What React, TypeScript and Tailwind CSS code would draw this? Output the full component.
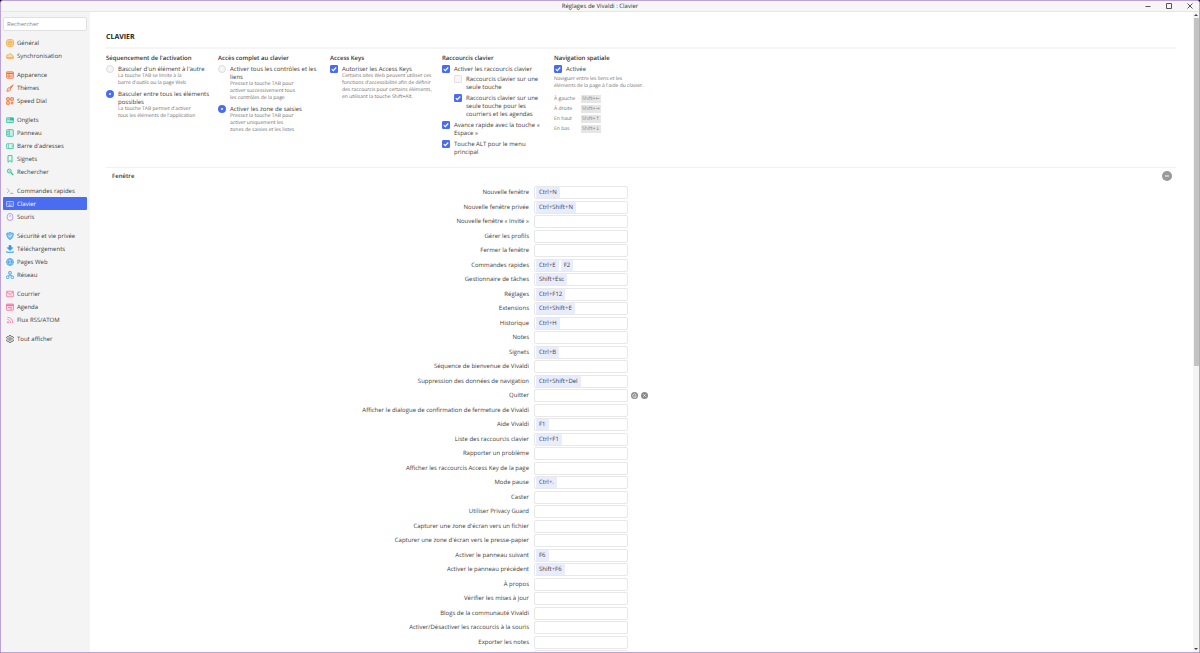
import { useId, type ReactNode } from 'react';

type IconName =
  | 'general' | 'sync' | 'appearance' | 'themes' | 'speeddial' | 'tabs' | 'panel' | 'address'
  | 'bookmark' | 'search' | 'commands' | 'keyboard' | 'mouse' | 'shield' | 'download' | 'globe'
  | 'network' | 'mail' | 'calendar' | 'rss' | 'gear';

const drawings: Record<IconName, ReactNode> = {
  general: (
    <>
      <rect x="1" y="1" width="14" height="14" rx="4.5" fill="currentColor" fillOpacity=".35" />
      <circle cx="8" cy="8" r="4" />
      <path d="M8 8l2-2M8 5.5v2.5H5.5" />
    </>
  ),
  sync: <path d="M4.200 13.500h8a3 3 0 0 0 .5-6A4.200 4.200 0 0 0 5 5.500 4 4 0 0 0 4.200 13.500zM1.500 11h13" fill="currentColor" fillOpacity=".3" />,
  appearance: (
    <>
      <rect x="1.200" y="1.500" width="13.600" height="13" rx="1.500" fill="currentColor" fillOpacity=".2" />
      <path d="M1 4.500h14" strokeWidth="2.500" />
      <path d="M4 8h4v4H4zM10.500 8H13M10.500 11.500H13" />
    </>
  ),
  themes: (
    <>
      <path d="M14.500 1.500L8 6.500l1.800 2L14.500 1.500z" fill="currentColor" />
      <path d="M7 7.500l2 2c1 3-2.500 5.500-7.500 5 1.500-1.500.5-3 1.500-5 .8-1.700 2.500-2.200 4-2z" fill="currentColor" fillOpacity=".25" />
    </>
  ),
  speeddial: <path d="M1.500 1.500h5v5h-5zM9.500 1.500h5v5h-5zM1.500 9.500h5v5h-5zM12 9v6M9 12h6" strokeWidth="2" />,
  tabs: (
    <>
      <rect x="0.800" y="3.500" width="14.400" height="9.500" rx="1" fill="currentColor" fillOpacity=".3" />
      <path d="M8 4.500h6.500V8H8z" fill="currentColor" />
      <path d="M3 7h2.500" />
    </>
  ),
  panel: (
    <>
      <rect x="1.200" y="1.200" width="13.600" height="13.600" rx="2" fill="currentColor" fillOpacity=".2" />
      <path d="M6.500 1.500v13M2.500 5H5M2.500 8H5M2.500 11H5" />
    </>
  ),
  address: (
    <>
      <rect x="0.800" y="3.500" width="14.400" height="9.500" rx="1.500" />
      <path d="M4.500 4v8.500M12.500 5.500v5.500" />
    </>
  ),
  bookmark: <path d="M4 1.200h8v13.300L8 11l-4 3.500z" strokeWidth="1.800" />,
  search: (
    <>
      <circle cx="6.500" cy="6" r="4" fill="currentColor" fillOpacity=".3" />
      <path d="M9.500 9l5 5" strokeWidth="2.300" />
    </>
  ),
  commands: <path d="M2 3l5 4.500L2 12M8 13h7M10 10l1 1" strokeWidth="1.300" />,
  keyboard: (
    <>
      <rect x="0.800" y="3" width="14.400" height="10" rx="1.500" />
      <path d="M3 6h1.500M6 6h1.500M9 6h1.500M12 6h1M3 8.300h1.500M6 8.300h1.500M9 8.300h1.500M12 8.300h1M4.500 10.700h7" />
    </>
  ),
  mouse: (
    <>
      <rect x="2.500" y="1" width="11" height="14" rx="5.500" />
      <path d="M8 4v4" />
    </>
  ),
  shield: (
    <>
      <path d="M8 .8c2.500 1.500 4.500 1.700 6.500 1.700 0 6-1.500 10-6.500 12.700C3 12.500 1.500 8.500 1.500 2.500 4 2.500 5.500 2.300 8 .8z" fill="currentColor" fillOpacity=".55" />
      <path d="M5 7.500l2.300 2.300L11.500 5.500" stroke="#fff" />
    </>
  ),
  download: (
    <>
      <path d="M6 1h4v4.500h3.500L8 11 2.500 5.500H6z" fill="currentColor" />
      <path d="M1.500 12.500v2h13v-2" strokeWidth="2" />
    </>
  ),
  globe: (
    <>
      <circle cx="8" cy="8" r="6.800" fill="currentColor" fillOpacity=".25" />
      <path d="M1.500 8h13M8 1.200c-4 4-4 9.600 0 13.600M8 1.200c4 4 4 9.600 0 13.600" />
    </>
  ),
  network: (
    <>
      <rect x="5.200" y="1" width="5.600" height="5" rx="1.500" fill="currentColor" fillOpacity=".2" />
      <rect x="0.800" y="10" width="5" height="5" rx="1.500" />
      <rect x="10.200" y="10" width="5" height="5" rx="1.500" />
      <path d="M8 6v3M3.500 10l4.500-2 4.500 2" />
    </>
  ),
  mail: (
    <>
      <rect x="0.800" y="2.500" width="14.400" height="11" rx="1" fill="currentColor" fillOpacity=".15" />
      <path d="M2 4l6 5 6-5" />
    </>
  ),
  calendar: (
    <>
      <rect x="0.900" y="2" width="14.200" height="12.500" rx="1.500" fill="currentColor" fillOpacity=".2" />
      <path d="M1 4.500h14" strokeWidth="3" />
      <path d="M4 9h8M8.500 12H12" />
    </>
  ),
  rss: (
    <>
      <circle cx="4" cy="12.500" r="1.200" fill="currentColor" />
      <path d="M2.500 7c4 0 6.500 2.500 6.500 7M2.500 2.500c7 0 11 4.500 11 11.500" />
    </>
  ),
  gear: (
    <>
      <path d="M6.500 1h3l.5 2 1.500.8 2-.6 1.500 2.600L13.500 7.200v1.600L15 10.200l-1.500 2.600-2-.6-1.500.8-.5 2h-3L6 13l-1.500-.8-2 .6L1 10.200l1.500-1.400V7.200L1 5.800l1.500-2.600 2 .6L6 3z" />
      <circle cx="8" cy="8" r="2.500" />
    </>
  ),
};

function Icon({ name }: { name: IconName }) {
  return (
    <svg viewBox="0 0 16 16" className="size-2 shrink-0" fill="none" stroke="currentColor" strokeWidth="1.5" aria-hidden="true">
      {drawings[name]}
    </svg>
  );
}

type NavItem = [IconName, string];
const navGroups: { color: string; items: NavItem[] }[] = [
  { color: 'text-[#f7a62b]', items: [['general', 'Général'], ['sync', 'Synchronisation']] },
  { color: 'text-[#fb6a2c]', items: [['appearance', 'Apparence'], ['themes', 'Thèmes'], ['speeddial', 'Speed Dial']] },
  {
    color: 'text-[#2cc0a0]',
    items: [['tabs', 'Onglets'], ['panel', 'Panneau'], ['address', "Barre d'adresses"], ['bookmark', 'Signets'], ['search', 'Rechercher']],
  },
  { color: 'text-[#a583f5]', items: [['commands', 'Commandes rapides'], ['keyboard', 'Clavier'], ['mouse', 'Souris']] },
  {
    color: 'text-[#2b9af0]',
    items: [['shield', 'Sécurité et vie privée'], ['download', 'Téléchargements'], ['globe', 'Pages Web'], ['network', 'Réseau']],
  },
  { color: 'text-[#fb6aa5]', items: [['mail', 'Courrier'], ['calendar', 'Agenda'], ['rss', 'Flux RSS/ATOM']] },
  { color: 'text-[#444444]', items: [['gear', 'Tout afficher']] },
];

const shortcuts: { label: string; keys?: string[]; active?: boolean }[] = [
  { label: 'Nouvelle fenêtre', keys: ['Ctrl+N'] },
  { label: 'Nouvelle fenêtre privée', keys: ['Ctrl+Shift+N'] },
  { label: 'Nouvelle fenêtre « Invité »' },
  { label: 'Gérer les profils' },
  { label: 'Fermer la fenêtre' },
  { label: 'Commandes rapides', keys: ['Ctrl+E', 'F2'] },
  { label: 'Gestionnaire de tâches', keys: ['Shift+Esc'] },
  { label: 'Réglages', keys: ['Ctrl+F12'] },
  { label: 'Extensions', keys: ['Ctrl+Shift+E'] },
  { label: 'Historique', keys: ['Ctrl+H'] },
  { label: 'Notes' },
  { label: 'Signets', keys: ['Ctrl+B'] },
  { label: 'Séquence de bienvenue de Vivaldi' },
  { label: 'Suppression des données de navigation', keys: ['Ctrl+Shift+Del'] },
  { label: 'Quitter', active: true },
  { label: 'Afficher le dialogue de confirmation de fermeture de Vivaldi' },
  { label: 'Aide Vivaldi', keys: ['F1'] },
  { label: 'Liste des raccourcis clavier', keys: ['Ctrl+F1'] },
  { label: 'Rapporter un problème' },
  { label: 'Afficher les raccourcis Access Key de la page' },
  { label: 'Mode pause', keys: ['Ctrl+.'] },
  { label: 'Caster' },
  { label: 'Utiliser Privacy Guard' },
  { label: "Capturer une zone d'écran vers un fichier" },
  { label: "Capturer une zone d'écran vers le presse-papier" },
  { label: 'Activer le panneau suivant', keys: ['F6'] },
  { label: 'Activer le panneau précédent', keys: ['Shift+F6'] },
  { label: 'À propos' },
  { label: 'Vérifier les mises à jour' },
  { label: 'Blogs de la communauté Vivaldi' },
  { label: 'Activer/Désactiver les raccourcis à la souris' },
  { label: 'Exporter les notes' },
  { label: '' },
];

const directions = [
  ['À gauche', 'Shift+←'],
  ['À droite', 'Shift+→'],
  ['En haut', 'Shift+↑'],
  ['En bas', 'Shift+↓'],
];

function Lines({ lines }: { lines: string[] }) {
  return (
    <>
      {lines.map((line) => (
        <span key={line} className="block whitespace-nowrap">{line}</span>
      ))}
    </>
  );
}

function Hint({ lines }: { lines: string[] }) {
  return (
    <p className="pl-3 text-[5px] leading-[7px] text-[#6e6e6e]">
      <Lines lines={lines} />
    </p>
  );
}

function Check({ lines, checked = false }: { lines: string[]; checked?: boolean }) {
  return (
    <label className="flex items-start gap-1 leading-2">
      <span className="relative size-2 shrink-0">
        <input
          type="checkbox"
          defaultChecked={checked}
          className="peer block size-2 appearance-none rounded-[1px] border border-[#e2e2e2] bg-[#f6f6f6] checked:border-[#4a6cf0] checked:bg-[#4a6cf0]"
        />
        <svg viewBox="0 0 8 8" className="pointer-events-none absolute inset-0 hidden size-2 peer-checked:block" fill="none" stroke="#fff" strokeWidth="1.2" aria-hidden="true">
          <path d="M1.800 4.200l1.500 1.500 2.900-3.200" />
        </svg>
      </span>
      <span><Lines lines={lines} /></span>
    </label>
  );
}

function Radio({ name, lines, checked = false }: { name: string; lines: string[]; checked?: boolean }) {
  return (
    <label className="flex items-start gap-1 leading-2">
      <input
        type="radio"
        name={name}
        defaultChecked={checked}
        className="size-2 shrink-0 appearance-none rounded-full border border-[#dddddd] bg-[#f6f6f6] checked:border-[3px] checked:border-[#4a6cf0] checked:bg-white"
      />
      <span><Lines lines={lines} /></span>
    </label>
  );
}

function Column({ title, children }: { title: string; children: ReactNode }) {
  return (
    <section>
      <h2 className="mb-[3px] text-[6px] leading-2 font-semibold whitespace-nowrap text-[#333333]">{title}</h2>
      {children}
    </section>
  );
}

function ShortcutRow({ label, keys = [], active }: { label: string; keys?: string[]; active?: boolean }) {
  const id = useId();
  return (
    <li className="grid grid-cols-[2fr_3fr] items-center odd:mb-0.5 even:mb-px">
      <label htmlFor={id} className="pr-[5px] text-right leading-[9px]">{label}</label>
      <div className="flex items-center gap-[3px]">
        <div className="flex h-[13px] w-[94px] items-center gap-0.5 rounded-[2px] border border-[#e8e8e8] bg-white px-px">
          {keys.map((key) => (
            <kbd key={key} className="rounded-[1px] bg-[#e9ecfc] px-[3px] font-[inherit] leading-[11px] whitespace-nowrap">{key}</kbd>
          ))}
          <input id={id} type="text" className="h-2 w-0 min-w-0 flex-1 outline-none" />
        </div>
        {active && (
          <>
            <button type="button" aria-label="Réinitialiser">
              <svg viewBox="0 0 16 16" className="size-[7px]" fill="none" stroke="#fff" strokeWidth="1.6">
                <circle cx="8" cy="8" r="8" fill="#8c8c8c" stroke="none" />
                <path d="M11.500 6.500A4 4 0 1 0 12 9H8.500" />
              </svg>
            </button>
            <button type="button" aria-label="Effacer">
              <svg viewBox="0 0 16 16" className="size-[7px]" fill="none" stroke="#fff" strokeWidth="1.6">
                <circle cx="8" cy="8" r="8" fill="#8c8c8c" stroke="none" />
                <path d="M5.500 5.500l5 5M10.500 5.500l-5 5" />
              </svg>
            </button>
          </>
        )}
      </div>
    </li>
  );
}

export default function App() {
  return (
    <div className="h-screen bg-[#1b1028] font-['Open_Sans','DejaVu_Sans',sans-serif] text-[6px] text-[#3c3c3c] [text-rendering:geometricPrecision]">
      <div className="flex h-full flex-col overflow-hidden rounded-t-[3px] border border-[#b9a3d8] bg-white">
        <header className="grid h-[11px] shrink-0 grid-cols-[1fr_auto_1fr] items-center border-b border-[#e6e6e6] bg-[#f6f6f6]">
          <span />
          <span className="leading-2 text-[#333333]">Réglages de Vivaldi : Clavier</span>
          <div className="flex justify-end gap-[15px] pr-1.5 text-[#555555]">
            <button type="button" aria-label="Réduire">
              <svg viewBox="0 0 6 6" className="size-1.5" fill="none" stroke="currentColor"><path d="M.5 3.500h5" /></svg>
            </button>
            <button type="button" aria-label="Agrandir">
              <svg viewBox="0 0 6 6" className="size-1.5" fill="none" stroke="currentColor"><path d="M.5.5h5v5h-5z" /></svg>
            </button>
            <button type="button" aria-label="Fermer">
              <svg viewBox="0 0 6 6" className="size-1.5" fill="none" stroke="currentColor"><path d="M.5.5l5 5M5.500.5l-5 5" /></svg>
            </button>
          </div>
        </header>

        <div className="flex min-h-0 flex-1">
          <aside className="w-[89px] shrink-0 bg-[#f4f4f4] px-0.5 pt-[5px]">
            <input
              type="search"
              aria-label="Rechercher"
              placeholder="Rechercher"
              className="mb-[5px] block h-[14px] w-[84px] rounded-[2px] border border-[#e0e0e0] bg-white px-[3px] outline-none placeholder:text-[#858585]"
            />
            <nav className="flex flex-col gap-1.5">
              {navGroups.map((group) => (
                <ul key={group.color}>
                  {group.items.map(([icon, text]) => {
                    const current = text === 'Clavier';
                    return (
                      <li key={text}>
                        <a
                          href="#"
                          aria-current={current ? 'page' : undefined}
                          className={
                            current
                              ? 'flex h-[13px] w-[84px] items-center gap-[3px] rounded-[1px] bg-[#4a6cf0] pl-[3px] text-white'
                              : 'flex h-[13px] items-center gap-[3px] pl-[3px]'
                          }
                        >
                          <span className={current ? 'text-[#d5ddff]' : group.color}><Icon name={icon} /></span>
                          <span className="leading-2 whitespace-nowrap">{text}</span>
                        </a>
                      </li>
                    );
                  })}
                </ul>
              ))}
            </nav>
          </aside>

          <main className="min-w-0 flex-1 overflow-hidden pt-[21px] pr-[17px] pl-4">
            <h1 className="text-[7px] leading-[10px] font-bold text-[#222222]">CLAVIER</h1>
            <div className="mt-1 h-0.5 bg-[#f5f5f5]" />

            <div className="mt-[5px] grid w-[560px] grid-cols-5 pb-[11px]">
              <Column title="Séquencement de l'activation">
                <div className="flex flex-col gap-[3px]">
                  <div>
                    <Radio name="focus" lines={["Basculer d'un élément à l'autre"]} />
                    <Hint lines={['La touche TAB se limite à la', "barre d'outils ou la page Web"]} />
                  </div>
                  <div>
                    <Radio name="focus" lines={['Basculer entre tous les éléments', 'possibles']} checked />
                    <Hint lines={["La touche TAB permet d'activer", "tous les éléments de l'application"]} />
                  </div>
                </div>
              </Column>

              <Column title="Accès complet au clavier">
                <div className="flex flex-col gap-[3px]">
                  <div>
                    <Radio name="access" lines={['Activer tous les contrôles et les', 'liens']} />
                    <Hint lines={['Pressez la touche TAB pour', 'activer successivement tous', 'les contrôles de la page']} />
                  </div>
                  <div>
                    <Radio name="access" lines={['Activer les zone de saisies']} checked />
                    <Hint lines={['Pressez la touche TAB pour', 'activer uniquement les', 'zones de saisies et les listes']} />
                  </div>
                </div>
              </Column>

              <Column title="Access Keys">
                <Check lines={['Autoriser les Access Keys']} checked />
                <Hint
                  lines={[
                    'Certains sites Web peuvent utiliser ces',
                    "fonctions d'accessibilité afin de définir",
                    'des raccourcis pour certains éléments,',
                    'en utilisant la touche Shift+Alt.',
                  ]}
                />
              </Column>

              <Column title="Raccourcis clavier">
                <div className="flex flex-col gap-[3px]">
                  <div className="flex flex-col gap-0.5">
                    <Check lines={['Activer les raccourcis clavier']} checked />
                    <div className="flex flex-col gap-[3px] pl-3">
                      <Check lines={['Raccourcis clavier sur une', 'seule touche']} />
                      <Check lines={['Raccourcis clavier sur une', 'seule touche pour les', 'courriers et les agendas']} checked />
                    </div>
                  </div>
                  <Check lines={['Avance rapide avec la touche «', 'Espace »']} checked />
                  <Check lines={['Touche ALT pour le menu', 'principal']} checked />
                </div>
              </Column>

              <Column title="Navigation spatiale">
                <Check lines={['Activée']} checked />
                <p className="mt-[3px] text-[5px] leading-[7px] text-[#6e6e6e]">
                  <Lines lines={['Naviguer entre les liens et les', "éléments de la page à l'aide du clavier."]} />
                </p>
                <dl className="mt-[5px] flex flex-col gap-0.5 text-[5px] leading-2 text-[#6e6e6e]">
                  {directions.map(([name, key]) => (
                    <div key={name} className="flex">
                      <dt className="w-[27px]">{name}</dt>
                      <dd className="bg-[#e6e6e6] px-px whitespace-nowrap text-[#888888]">{key}</dd>
                    </div>
                  ))}
                </dl>
              </Column>
            </div>

            <section className="border-t border-[#f2f2f2]">
              <div className="flex items-center justify-between pt-[3px] pr-1 pb-[5px] pl-1.5">
                <h2 className="leading-2 font-semibold text-[#333333]">Fenêtre</h2>
                <button type="button" aria-label="Replier la section">
                  <svg viewBox="0 0 10 10" className="size-2.5" fill="none" stroke="#fff">
                    <circle cx="5" cy="5" r="5" fill="#999999" stroke="none" />
                    <path d="M3 5h4" />
                  </svg>
                </button>
              </div>
              <ul>
                {shortcuts.map((shortcut) => (
                  <ShortcutRow key={shortcut.label} {...shortcut} />
                ))}
              </ul>
            </section>
          </main>

          <div className="flex w-1.5 shrink-0 flex-col items-center bg-[#f4f4f4]" aria-hidden="true">
            <svg viewBox="0 0 6 6" className="size-1.5 shrink-0" fill="#444"><path d="M1 4l2-2 2 2z" /></svg>
            <div className="w-[5px] grow-[348] bg-[#c3c3c3]" />
            <div className="grow-[280]" />
            <svg viewBox="0 0 6 6" className="size-1.5 shrink-0" fill="#444"><path d="M1 2l2 2 2-2z" /></svg>
          </div>
        </div>
      </div>
    </div>
  );
}
